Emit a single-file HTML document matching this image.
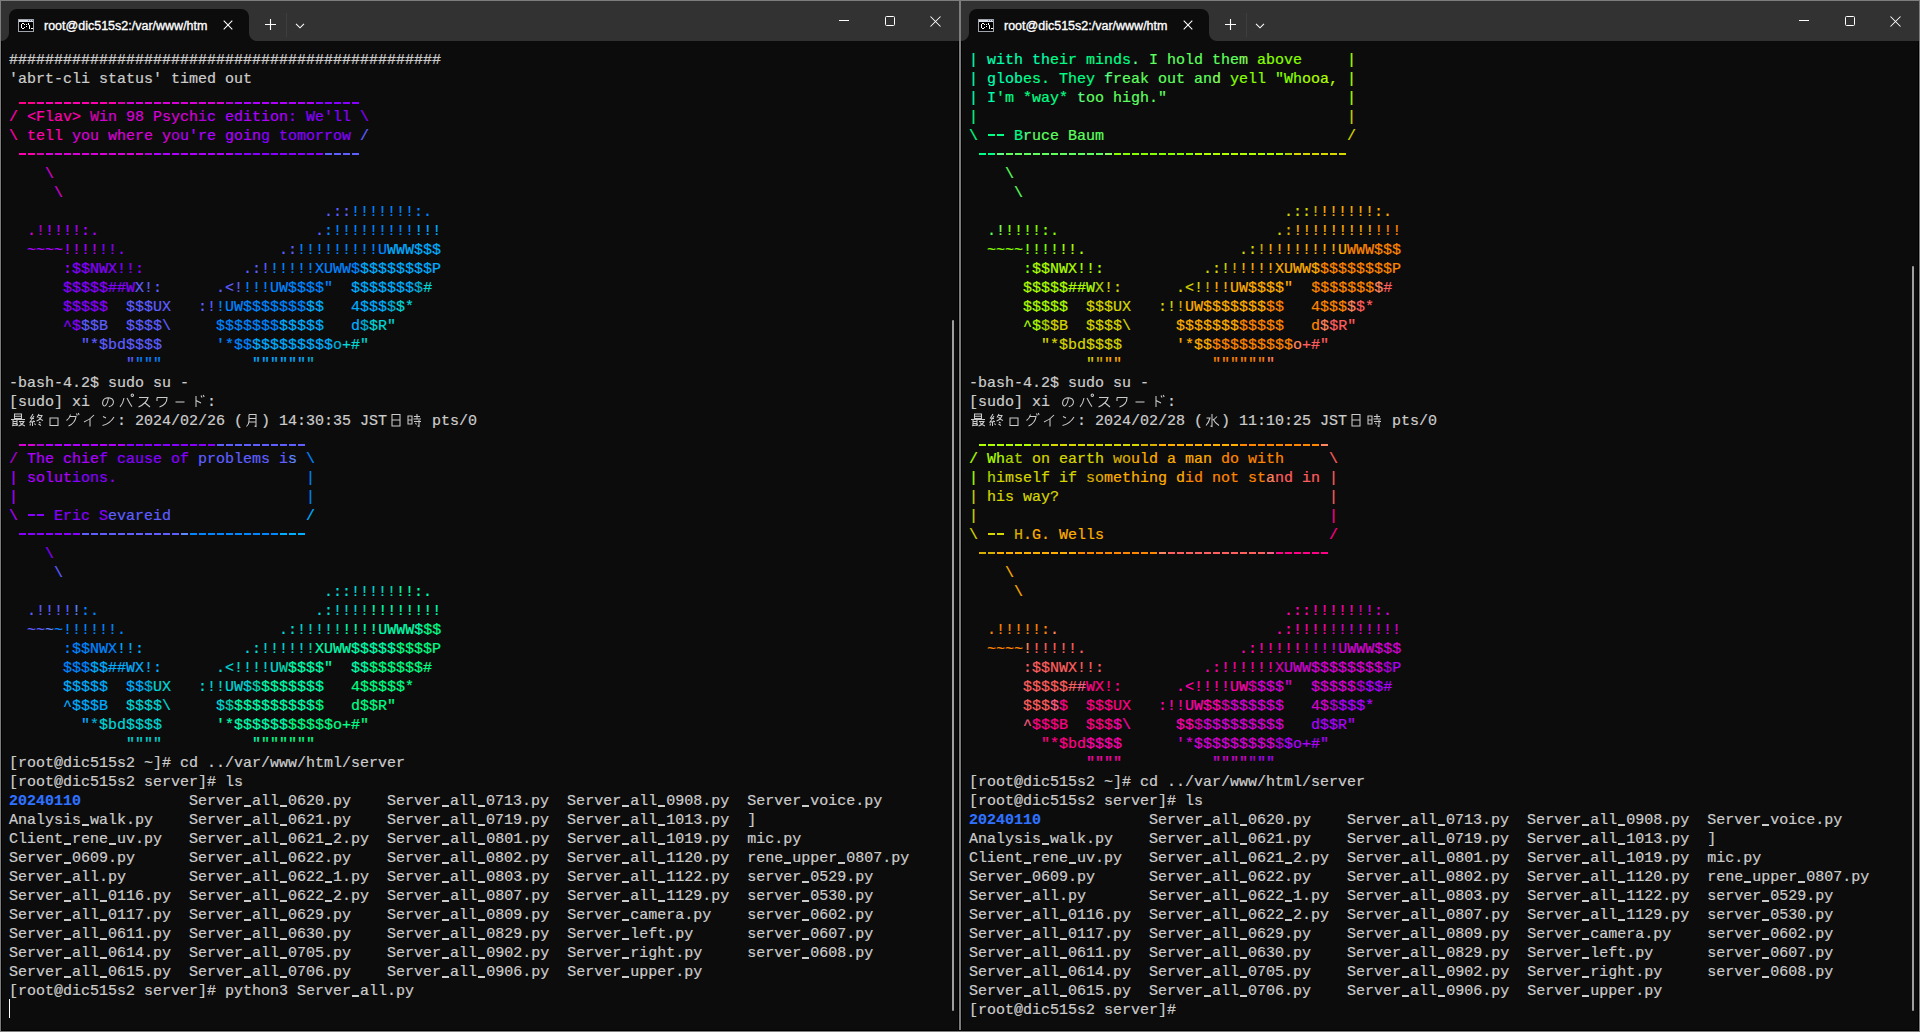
<!DOCTYPE html><html><head><meta charset="utf-8"><style>
html,body{margin:0;padding:0}
body{width:1920px;height:1032px;overflow:hidden;position:relative;background:#0c0c0c}
.win{position:absolute;top:0;width:960px;height:1032px;background:#0c0c0c;overflow:hidden}
.tb{position:absolute;left:0;top:0;width:960px;height:41px;background:#323232}
.tab{position:absolute;left:9px;top:9px;width:240px;height:32px;background:#0c0c0c;border-radius:8px 8px 0 0}
.foot{position:absolute;bottom:0;width:8px;height:8px;background:#0c0c0c}
.foot::after{content:"";position:absolute;left:0;top:0;width:8px;height:8px;background:#323232}
.fl{left:-8px}
.fl::after{border-bottom-right-radius:8px}
.fr{right:-8px}
.fr::after{border-bottom-left-radius:8px}
.ticon{position:absolute;left:9px;top:10px}
.ttl{position:absolute;left:35px;top:10px;font:12.5px/14px "Liberation Sans",sans-serif;-webkit-text-stroke:0.35px #fff;color:#fff;white-space:nowrap}
.tclose{position:absolute;left:214px;top:11px}
.plus{position:absolute;left:265px;top:19px}
.sep{position:absolute;left:286px;top:13px;width:1px;height:24px;background:#3e3e3e}
.chev{position:absolute;left:295px;top:22.5px}
.wmin{position:absolute;left:839px;top:20px;width:10px;height:1px;background:#fff}
.wmax{position:absolute;left:885px;top:16px;width:8px;height:8px;border:1px solid #fff;border-radius:1.5px}
.wclose{position:absolute;left:930px;top:15.5px}
.term{position:absolute;left:0;top:41px;width:960px;height:991px}
.row{position:absolute;left:9px;height:19px;white-space:pre;font:15px/19px "Liberation Mono",monospace;color:#cccccc}
.row i{font-style:normal}
.dir{color:#2f72ff;font-weight:bold}
.cj{position:absolute;top:-1.5px;fill:none;stroke:#cccccc;stroke-width:1.05}
.cursor{position:absolute;left:9px;top:958px;width:1px;height:19px;background:#fff}
.bd{position:absolute;background:#7d7d7d}
.sb{position:absolute;width:2px;background:#9f9f9f;border-radius:1px}
.row i.d,.row i.u{display:inline-block;height:19px;vertical-align:top}
.row i.d{background:linear-gradient(to right,currentColor 7px,transparent 7px) 1px 7px/9px 2px repeat-x}
.row i.u{background:linear-gradient(to right,currentColor 7px,transparent 7px) 1px 13px/9px 2px repeat-x}
.row{-webkit-text-stroke:0.2px currentColor}
.ib{position:absolute;background:#000}

</style></head><body>
<div class="win" style="left:0px">
<div class="tb"><div class="tab"><div class="foot fl"></div><div class="foot fr"></div><svg class="ticon" width="16" height="13" viewBox="0 0 16 13" shape-rendering="crispEdges"><rect x="0" y="0" width="16" height="13" fill="#a0a4ac"/><rect x="1" y="1" width="14" height="2" fill="#d8dce4"/><rect x="10" y="1" width="1" height="1" fill="#5a6a8a"/><rect x="12" y="1" width="1" height="1" fill="#5a6a8a"/><rect x="14" y="1" width="1" height="1" fill="#5a6a8a"/><rect x="1" y="3" width="14" height="9" fill="#000"/><g fill="#fff"><rect x="3" y="5" width="1" height="4"/><rect x="4" y="4" width="2" height="1"/><rect x="4" y="9" width="2" height="1"/><rect x="6" y="5" width="1" height="1"/><rect x="6" y="8" width="1" height="1"/><rect x="8" y="5" width="1" height="1"/><rect x="8" y="7" width="1" height="1"/><rect x="10" y="4" width="1" height="2"/><rect x="11" y="6" width="1" height="2"/><rect x="11" y="8" width="1" height="2"/><rect x="13" y="9" width="2" height="1"/></g></svg><span class="ttl">root@dic515s2:/var/www/htm</span><svg class="tclose" width="10" height="10" viewBox="0 0 10 10"><path d="M0.7 0.7L9.3 9.3M9.3 0.7L0.7 9.3" stroke="#fff" stroke-width="1.05"/></svg></div><svg class="plus" width="11" height="11" viewBox="0 0 11 11"><path d="M5.5 0V11M0 5.5H11" stroke="#fff" stroke-width="1.1"/></svg><div class="sep"></div><svg class="chev" width="10" height="6" viewBox="0 0 10 6"><path d="M1 0.8L5 4.8L9 0.8" stroke="#fff" stroke-width="1.05" fill="none"/></svg><div class="wmin"></div><div class="wmax"></div><svg class="wclose" width="11" height="11" viewBox="0 0 11 11"><path d="M0.5 0.5L10.5 10.5M10.5 0.5L0.5 10.5" stroke="#fff" stroke-width="1.05"/></svg></div>
<div class="term">
<div class="row" style="top:10px">################################################</div>
<div class="row" style="top:29px">'abrt-cli status' timed out</div>
<div class="row" style="top:48px"> <i class="u" style="color:#ff0087;width:18px"></i><i class="u" style="color:#ff00af;width:81px"></i><i class="u" style="color:#d700af;width:9px"></i><i class="u" style="color:#d700d7;width:99px"></i><i class="u" style="color:#af00d7;width:9px"></i><i class="u" style="color:#af00ff;width:81px"></i><i class="u" style="color:#8700ff;width:45px"></i></div>
<div class="row" style="top:67px"><i style="color:#ff00af">/ &lt;Flav&gt; </i><i style="color:#d700af">W</i><i style="color:#d700d7">in 98 Psych</i><i style="color:#af00d7">i</i><i style="color:#af00ff">c edition</i><i style="color:#8700ff">: We'll \</i></div>
<div class="row" style="top:86px"><i style="color:#ff00af">\ tell </i><i style="color:#d700d7">you where y</i><i style="color:#af00d7">o</i><i style="color:#af00ff">u're goin</i><i style="color:#8700ff">g tomorrow </i><i style="color:#5f5fff">/</i></div>
<div class="row" style="top:105px"> <i class="d" style="color:#ff00af;width:18px"></i><i class="d" style="color:#d700af;width:9px"></i><i class="d" style="color:#d700d7;width:99px"></i><i class="d" style="color:#af00d7;width:9px"></i><i class="d" style="color:#af00ff;width:81px"></i><i class="d" style="color:#8700ff;width:90px"></i><i class="d" style="color:#5f5fff;width:36px"></i></div>
<div class="row" style="top:124px">    <i style="color:#d700d7">\</i></div>
<div class="row" style="top:143px">     <i style="color:#d700d7">\</i></div>
<div class="row" style="top:162px">                                   <i style="color:#5f5fff">.::</i><i style="color:#0087ff">!!!!!!!:.</i></div>
<div class="row" style="top:181px">  <i style="color:#d700d7">.</i><i style="color:#af00d7">!</i><i style="color:#af00ff">!!!!:.                        </i><i style="color:#5f5fff">.</i><i style="color:#0087ff">:!!!!!!!!!</i><i style="color:#00afff">!!!</i></div>
<div class="row" style="top:200px">  <i style="color:#af00ff">~~~~!!!!</i><i style="color:#8700ff">!!.                 </i><i style="color:#5f5fff">.:</i><i style="color:#0087ff">!!!!!!!!!U</i><i style="color:#00afff">WWW$$$</i></div>
<div class="row" style="top:219px">      <i style="color:#af00ff">:</i><i style="color:#8700ff">$$NWX!!:           </i><i style="color:#5f5fff">.:!</i><i style="color:#0087ff">!!!!!XUWW$</i><i style="color:#00afff">$$$$$$$$P</i></div>
<div class="row" style="top:238px">      <i style="color:#8700ff">$$$$$##W</i><i style="color:#5f5fff">X!:      .&lt;!</i><i style="color:#0087ff">!!!UW$$$$"  </i><i style="color:#00afff">$$$$$$$</i><i style="color:#00afd7">$</i><i style="color:#00d7d7">#</i></div>
<div class="row" style="top:257px">      <i style="color:#8700ff">$$$$$  </i><i style="color:#5f5fff">$$$UX   :!</i><i style="color:#0087ff">!UW$$$$$$$</i><i style="color:#00afff">$$   4$$$</i><i style="color:#00afd7">$</i><i style="color:#00d7d7">$*</i></div>
<div class="row" style="top:276px">      <i style="color:#8700ff">^$</i><i style="color:#5f5fff">$$B  $$$$\     </i><i style="color:#0087ff">$$$$$$$</i><i style="color:#00afff">$$$$$   d</i><i style="color:#00afd7">$</i><i style="color:#00d7d7">$R"</i></div>
<div class="row" style="top:295px">        <i style="color:#5f5fff">"*$bd$$$$      </i><i style="color:#0087ff">'*$$</i><i style="color:#00afff">$$$$$$$$$</i><i style="color:#00afd7">o</i><i style="color:#00d7d7">+#"</i></div>
<div class="row" style="top:314px">             <i style="color:#5f5fff">"</i><i style="color:#0087ff">"""          </i><i style="color:#00afff">""""""</i><i style="color:#00afd7">"</i></div>
<div class="row" style="top:333px">-bash-4.2$ sudo su -</div>
<div class="row" style="top:352px">[sudo] xi             :<svg class="cj" style="left:90px" width="18" height="19" viewBox="0 0 18 19"><path d="M9.5 5.5C9 9 8 13 6 13.8C4 14.5 3 11.5 4 9C5 6.5 8 5.5 11 6C14 6.5 15.2 9.5 14 12C13 14 11 14.6 9.8 14.8"/></svg><svg class="cj" style="left:108px" width="18" height="19" viewBox="0 0 18 19"><path d="M7 6C6.5 9.5 5 12.5 3 14.8M10 6C11.5 9 13 12 15 14.8M15.3 3.2m-1.2 0a1.2 1.2 0 1 0 2.4 0a1.2 1.2 0 1 0 -2.4 0"/></svg><svg class="cj" style="left:126px" width="18" height="19" viewBox="0 0 18 19"><path d="M4 5.5H13C12 9 8 13 3.5 15M9.5 10.5L15 15"/></svg><svg class="cj" style="left:144px" width="18" height="19" viewBox="0 0 18 19"><path d="M4 5.5V9M4 5.5H14C14 10 11 13.5 6.5 15"/></svg><svg class="cj" style="left:162px" width="18" height="19" viewBox="0 0 18 19"><path d="M4.5 10H13.5"/></svg><svg class="cj" style="left:180px" width="18" height="19" viewBox="0 0 18 19"><path d="M7 4V15M7 8.5L12 11M12 3.5L13 5.5M14.2 3L15.2 5"/></svg></div>
<div class="row" style="top:371px">            : 2024/02/26 (  ) 14:30:35 JST     pts/0<svg class="cj" style="left:0px" width="18" height="19" viewBox="0 0 18 19"><path d="M5.5 3H12.5V7.5H5.5ZM5.5 5.25H12.5M2 8.5H16M4 8.5V15M4 10.5H8M4 12.5H8M3 14.8L9 13.8M8 8.5V15M10 10.5H15C14 12.5 12 14.5 9.5 15M11 11.5C12 13 14 14.5 16 15"/></svg><svg class="cj" style="left:18px" width="18" height="19" viewBox="0 0 18 19"><path d="M6 3L3.5 7L7 7.5M7 5L3 11L8 10.5M6.5 9.5L7.5 11M5.5 11V15M3.5 12.5L3 14.5M7.5 12.5L8.5 14M12 3L10 6.5M11 4.5H15C13.5 8 11.5 9.5 9.5 10M11.5 6C13 8 14.5 9 16 9.5M12 11L13.5 12M11.5 13L14 14.5"/></svg><svg class="cj" style="left:36px" width="18" height="19" viewBox="0 0 18 19"><path d="M5 7H13V14.5H5Z"/></svg><svg class="cj" style="left:54px" width="18" height="19" viewBox="0 0 18 19"><path d="M7.5 3.5C7 6 5.5 8 3.5 9.5M7 5.5H13C12.5 10 10 13 5.5 15M13.5 2.5L14.3 4.5M15.3 2L16.1 4"/></svg><svg class="cj" style="left:72px" width="18" height="19" viewBox="0 0 18 19"><path d="M13 4C10.5 7 7 9.5 3 11M9 8V15.5"/></svg><svg class="cj" style="left:90px" width="18" height="19" viewBox="0 0 18 19"><path d="M4 5.5L7 7M3.5 14.5C8 13.5 12 11 15 6"/></svg><svg class="cj" style="left:234px" width="18" height="19" viewBox="0 0 18 19"><path d="M6 3.5V10C6 12.5 5 14 3.5 15.5M6 3.5H13V15.5L11.5 15M6 7.5H13M6 11H13"/></svg><svg class="cj" style="left:378px" width="18" height="19" viewBox="0 0 18 19"><path d="M5 3.5H13V15H5ZM5 9H13"/></svg><svg class="cj" style="left:396px" width="18" height="19" viewBox="0 0 18 19"><path d="M3 5H7V13H3ZM3 9H7M9 5.5H15M12 3V8M8.5 8H16M9 10.5H16M14 9V15.5L12.5 15M10.5 12L11.5 13.5"/></svg></div>
<div class="row" style="top:390px"> <i class="u" style="color:#d700d7;width:18px"></i><i class="u" style="color:#af00d7;width:9px"></i><i class="u" style="color:#af00ff;width:81px"></i><i class="u" style="color:#8700ff;width:90px"></i><i class="u" style="color:#5f5fff;width:90px"></i></div>
<div class="row" style="top:409px"><i style="color:#af00d7">/ </i><i style="color:#af00ff">The chie</i><i style="color:#8700ff">f cause of </i><i style="color:#5f5fff">problems i</i><i style="color:#5f87ff">s </i><i style="color:#0087ff">\</i></div>
<div class="row" style="top:428px"><i style="color:#af00ff">| solut</i><i style="color:#8700ff">ions.                     </i><i style="color:#0087ff">|</i></div>
<div class="row" style="top:447px"><i style="color:#af00ff">|                                </i><i style="color:#0087ff">|</i></div>
<div class="row" style="top:466px"><i style="color:#af00ff">\ </i><i class="d" style="color:#8700ff;width:18px"></i><i style="color:#8700ff"> Eric S</i><i style="color:#5f5fff">evareid               </i><i style="color:#00afff">/</i></div>
<div class="row" style="top:485px"> <i class="d" style="color:#8700ff;width:63px"></i><i class="d" style="color:#5f5fff;width:99px"></i><i class="d" style="color:#5f87ff;width:9px"></i><i class="d" style="color:#0087ff;width:90px"></i><i class="d" style="color:#00afff;width:27px"></i></div>
<div class="row" style="top:504px">    <i style="color:#8700ff">\</i></div>
<div class="row" style="top:523px">     <i style="color:#5f5fff">\</i></div>
<div class="row" style="top:542px">                                   <i style="color:#00d7d7">.::!!!!</i><i style="color:#00d7af">!</i><i style="color:#00ffaf">!!:.</i></div>
<div class="row" style="top:561px">  <i style="color:#5f5fff">.!!!!</i><i style="color:#5f87ff">!</i><i style="color:#0087ff">:.                        </i><i style="color:#00d7d7">.:!!!</i><i style="color:#00d7af">!</i><i style="color:#00ffaf">!!!!!!!!</i></div>
<div class="row" style="top:580px">  <i style="color:#5f5fff">~~</i><i style="color:#5f87ff">~</i><i style="color:#0087ff">~!!!!!!.                 </i><i style="color:#00d7d7">.:!!!!</i><i style="color:#00d7af">!</i><i style="color:#00ffaf">!!!!UWWW$</i><i style="color:#00ff87">$$</i></div>
<div class="row" style="top:599px">      <i style="color:#0087ff">:$$NWX</i><i style="color:#00afff">!!:           </i><i style="color:#00d7d7">.:!!!!!</i><i style="color:#00d7af">!</i><i style="color:#00ffaf">XUWW$$$$$</i><i style="color:#00ff87">$$$$P</i></div>
<div class="row" style="top:618px">      <i style="color:#0087ff">$$$</i><i style="color:#00afff">$$##WX!:      </i><i style="color:#00d7d7">.&lt;!!!!U</i><i style="color:#00d7af">W</i><i style="color:#00ffaf">$$$$"  $$</i><i style="color:#00ff87">$$$$$$#</i></div>
<div class="row" style="top:637px">      <i style="color:#00afff">$$$$$  $$</i><i style="color:#00afd7">$</i><i style="color:#00d7d7">UX   :!!UW$</i><i style="color:#00d7af">$</i><i style="color:#00ffaf">$$$$$$$   </i><i style="color:#00ff87">4$$$$$*</i></div>
<div class="row" style="top:656px">      <i style="color:#00afff">^$$$B  </i><i style="color:#00d7d7">$$$$\     $</i><i style="color:#00d7af">$</i><i style="color:#00ffaf">$$$$$$$$$</i><i style="color:#00ff87">$   d$$R"</i></div>
<div class="row" style="top:675px">        <i style="color:#00afff">"</i><i style="color:#00afd7">*</i><i style="color:#00d7d7">$bd$$$$      </i><i style="color:#00ffaf">'*$$$$$$</i><i style="color:#00ff87">$$$$$o+#"</i></div>
<div class="row" style="top:694px">             <i style="color:#00d7d7">""""          </i><i style="color:#00ffaf">"</i><i style="color:#00ff87">""""""</i></div>
<div class="row" style="top:713px">[root@dic515s2 ~]# cd ../var/www/html/server</div>
<div class="row" style="top:732px">[root@dic515s2 server]# ls</div>
<div class="row" style="top:751px"><b class="dir">20240110</b>            Server<i class="u" style="width:9px"></i>all<i class="u" style="width:9px"></i>0620.py    Server<i class="u" style="width:9px"></i>all<i class="u" style="width:9px"></i>0713.py  Server<i class="u" style="width:9px"></i>all<i class="u" style="width:9px"></i>0908.py  Server<i class="u" style="width:9px"></i>voice.py</div>
<div class="row" style="top:770px">Analysis<i class="u" style="width:9px"></i>walk.py    Server<i class="u" style="width:9px"></i>all<i class="u" style="width:9px"></i>0621.py    Server<i class="u" style="width:9px"></i>all<i class="u" style="width:9px"></i>0719.py  Server<i class="u" style="width:9px"></i>all<i class="u" style="width:9px"></i>1013.py  ]</div>
<div class="row" style="top:789px">Client<i class="u" style="width:9px"></i>rene<i class="u" style="width:9px"></i>uv.py   Server<i class="u" style="width:9px"></i>all<i class="u" style="width:9px"></i>0621<i class="u" style="width:9px"></i>2.py  Server<i class="u" style="width:9px"></i>all<i class="u" style="width:9px"></i>0801.py  Server<i class="u" style="width:9px"></i>all<i class="u" style="width:9px"></i>1019.py  mic.py</div>
<div class="row" style="top:808px">Server<i class="u" style="width:9px"></i>0609.py      Server<i class="u" style="width:9px"></i>all<i class="u" style="width:9px"></i>0622.py    Server<i class="u" style="width:9px"></i>all<i class="u" style="width:9px"></i>0802.py  Server<i class="u" style="width:9px"></i>all<i class="u" style="width:9px"></i>1120.py  rene<i class="u" style="width:9px"></i>upper<i class="u" style="width:9px"></i>0807.py</div>
<div class="row" style="top:827px">Server<i class="u" style="width:9px"></i>all.py       Server<i class="u" style="width:9px"></i>all<i class="u" style="width:9px"></i>0622<i class="u" style="width:9px"></i>1.py  Server<i class="u" style="width:9px"></i>all<i class="u" style="width:9px"></i>0803.py  Server<i class="u" style="width:9px"></i>all<i class="u" style="width:9px"></i>1122.py  server<i class="u" style="width:9px"></i>0529.py</div>
<div class="row" style="top:846px">Server<i class="u" style="width:9px"></i>all<i class="u" style="width:9px"></i>0116.py  Server<i class="u" style="width:9px"></i>all<i class="u" style="width:9px"></i>0622<i class="u" style="width:9px"></i>2.py  Server<i class="u" style="width:9px"></i>all<i class="u" style="width:9px"></i>0807.py  Server<i class="u" style="width:9px"></i>all<i class="u" style="width:9px"></i>1129.py  server<i class="u" style="width:9px"></i>0530.py</div>
<div class="row" style="top:865px">Server<i class="u" style="width:9px"></i>all<i class="u" style="width:9px"></i>0117.py  Server<i class="u" style="width:9px"></i>all<i class="u" style="width:9px"></i>0629.py    Server<i class="u" style="width:9px"></i>all<i class="u" style="width:9px"></i>0809.py  Server<i class="u" style="width:9px"></i>camera.py    server<i class="u" style="width:9px"></i>0602.py</div>
<div class="row" style="top:884px">Server<i class="u" style="width:9px"></i>all<i class="u" style="width:9px"></i>0611.py  Server<i class="u" style="width:9px"></i>all<i class="u" style="width:9px"></i>0630.py    Server<i class="u" style="width:9px"></i>all<i class="u" style="width:9px"></i>0829.py  Server<i class="u" style="width:9px"></i>left.py      server<i class="u" style="width:9px"></i>0607.py</div>
<div class="row" style="top:903px">Server<i class="u" style="width:9px"></i>all<i class="u" style="width:9px"></i>0614.py  Server<i class="u" style="width:9px"></i>all<i class="u" style="width:9px"></i>0705.py    Server<i class="u" style="width:9px"></i>all<i class="u" style="width:9px"></i>0902.py  Server<i class="u" style="width:9px"></i>right.py     server<i class="u" style="width:9px"></i>0608.py</div>
<div class="row" style="top:922px">Server<i class="u" style="width:9px"></i>all<i class="u" style="width:9px"></i>0615.py  Server<i class="u" style="width:9px"></i>all<i class="u" style="width:9px"></i>0706.py    Server<i class="u" style="width:9px"></i>all<i class="u" style="width:9px"></i>0906.py  Server<i class="u" style="width:9px"></i>upper.py</div>
<div class="row" style="top:941px">[root@dic515s2 server]# python3 Server<i class="u" style="width:9px"></i>all.py</div>
<div class="cursor"></div>
</div>
</div>
<div class="win" style="left:960px">
<div class="tb"><div class="tab"><div class="foot fl"></div><div class="foot fr"></div><svg class="ticon" width="16" height="13" viewBox="0 0 16 13" shape-rendering="crispEdges"><rect x="0" y="0" width="16" height="13" fill="#a0a4ac"/><rect x="1" y="1" width="14" height="2" fill="#d8dce4"/><rect x="10" y="1" width="1" height="1" fill="#5a6a8a"/><rect x="12" y="1" width="1" height="1" fill="#5a6a8a"/><rect x="14" y="1" width="1" height="1" fill="#5a6a8a"/><rect x="1" y="3" width="14" height="9" fill="#000"/><g fill="#fff"><rect x="3" y="5" width="1" height="4"/><rect x="4" y="4" width="2" height="1"/><rect x="4" y="9" width="2" height="1"/><rect x="6" y="5" width="1" height="1"/><rect x="6" y="8" width="1" height="1"/><rect x="8" y="5" width="1" height="1"/><rect x="8" y="7" width="1" height="1"/><rect x="10" y="4" width="1" height="2"/><rect x="11" y="6" width="1" height="2"/><rect x="11" y="8" width="1" height="2"/><rect x="13" y="9" width="2" height="1"/></g></svg><span class="ttl">root@dic515s2:/var/www/htm</span><svg class="tclose" width="10" height="10" viewBox="0 0 10 10"><path d="M0.7 0.7L9.3 9.3M9.3 0.7L0.7 9.3" stroke="#fff" stroke-width="1.05"/></svg></div><svg class="plus" width="11" height="11" viewBox="0 0 11 11"><path d="M5.5 0V11M0 5.5H11" stroke="#fff" stroke-width="1.1"/></svg><div class="sep"></div><svg class="chev" width="10" height="6" viewBox="0 0 10 6"><path d="M1 0.8L5 4.8L9 0.8" stroke="#fff" stroke-width="1.05" fill="none"/></svg><div class="wmin"></div><div class="wmax"></div><svg class="wclose" width="11" height="11" viewBox="0 0 11 11"><path d="M0.5 0.5L10.5 10.5M10.5 0.5L0.5 10.5" stroke="#fff" stroke-width="1.05"/></svg></div>
<div class="term">
<div class="row" style="top:10px"><i style="color:#00ffaf">| with th</i><i style="color:#00ff87">eir minds</i><i style="color:#5fff87">. </i><i style="color:#5fff5f">I hold the</i><i style="color:#87ff5f">m </i><i style="color:#87ff00">above     </i><i style="color:#afff00">|</i></div>
<div class="row" style="top:29px"><i style="color:#00ffaf">| glob</i><i style="color:#00ff87">es. They </i><i style="color:#5fff87">f</i><i style="color:#5fff5f">reak out an</i><i style="color:#87ff5f">d </i><i style="color:#87ff00">yell "Wh</i><i style="color:#afff00">ooa, |</i></div>
<div class="row" style="top:48px"><i style="color:#00ffaf">| I</i><i style="color:#00ff87">'m *way* </i><i style="color:#5fff87">t</i><i style="color:#5fff5f">oo high."                    </i><i style="color:#afff00">|</i></div>
<div class="row" style="top:67px"><i style="color:#00ff87">|                                         </i><i style="color:#d7d700">|</i></div>
<div class="row" style="top:86px"><i style="color:#00ff87">\ </i><i class="d" style="color:#00ff87;width:18px"></i><i style="color:#00ff87"> B</i><i style="color:#5fff87">r</i><i style="color:#5fff5f">uce Baum                           </i><i style="color:#d7d700">/</i></div>
<div class="row" style="top:105px"> <i class="d" style="color:#00ff87;width:18px"></i><i class="d" style="color:#5fff87;width:9px"></i><i class="d" style="color:#5fff5f;width:99px"></i><i class="d" style="color:#87ff5f;width:9px"></i><i class="d" style="color:#87ff00;width:81px"></i><i class="d" style="color:#afff00;width:90px"></i><i class="d" style="color:#afd700;width:9px"></i><i class="d" style="color:#d7d700;width:54px"></i></div>
<div class="row" style="top:124px">    <i style="color:#5fff5f">\</i></div>
<div class="row" style="top:143px">     <i style="color:#5fff5f">\</i></div>
<div class="row" style="top:162px">                                   <i style="color:#d7d700">.::</i><i style="color:#d7af00">!</i><i style="color:#ffaf00">!!!!!!:.</i></div>
<div class="row" style="top:181px">  <i style="color:#5fff5f">.</i><i style="color:#87ff5f">!</i><i style="color:#87ff00">!!!!:.                        </i><i style="color:#d7d700">.</i><i style="color:#d7af00">:</i><i style="color:#ffaf00">!!!!!!!!!</i><i style="color:#ff8700">!!!</i></div>
<div class="row" style="top:200px">  <i style="color:#87ff00">~~~~!!!!</i><i style="color:#afff00">!!.                 </i><i style="color:#d7d700">.:</i><i style="color:#d7af00">!</i><i style="color:#ffaf00">!!!!!!!!U</i><i style="color:#ff8700">WWW$$$</i></div>
<div class="row" style="top:219px">      <i style="color:#87ff00">:</i><i style="color:#afff00">$$NWX!!:           </i><i style="color:#d7d700">.:!</i><i style="color:#d7af00">!</i><i style="color:#ffaf00">!!!!XUWW$</i><i style="color:#ff8700">$$$$$$$$P</i></div>
<div class="row" style="top:238px">      <i style="color:#afff00">$$$$$##W</i><i style="color:#afd700">X</i><i style="color:#d7d700">!:      .&lt;!</i><i style="color:#d7af00">!</i><i style="color:#ffaf00">!!UW$$$$"  </i><i style="color:#ff8700">$$$$$$$</i><i style="color:#ff875f">$</i><i style="color:#ff5f5f">#</i></div>
<div class="row" style="top:257px">      <i style="color:#afff00">$$$$$  </i><i style="color:#d7d700">$$$UX   :!</i><i style="color:#d7af00">!</i><i style="color:#ffaf00">UW$$$$$$$</i><i style="color:#ff8700">$$   4$$$</i><i style="color:#ff875f">$</i><i style="color:#ff5f5f">$*</i></div>
<div class="row" style="top:276px">      <i style="color:#afff00">^$</i><i style="color:#afd700">$</i><i style="color:#d7d700">$B  $$$$\     </i><i style="color:#ffaf00">$$$$$$$</i><i style="color:#ff8700">$$$$$   d</i><i style="color:#ff875f">$</i><i style="color:#ff5f5f">$R"</i></div>
<div class="row" style="top:295px">        <i style="color:#d7d700">"*$bd$$$$      </i><i style="color:#ffaf00">'*$$</i><i style="color:#ff8700">$$$$$$$$$</i><i style="color:#ff875f">o</i><i style="color:#ff5f5f">+#"</i></div>
<div class="row" style="top:314px">             <i style="color:#d7d700">"</i><i style="color:#d7af00">"</i><i style="color:#ffaf00">""          </i><i style="color:#ff8700">""""""</i><i style="color:#ff875f">"</i></div>
<div class="row" style="top:333px">-bash-4.2$ sudo su -</div>
<div class="row" style="top:352px">[sudo] xi             :<svg class="cj" style="left:90px" width="18" height="19" viewBox="0 0 18 19"><path d="M9.5 5.5C9 9 8 13 6 13.8C4 14.5 3 11.5 4 9C5 6.5 8 5.5 11 6C14 6.5 15.2 9.5 14 12C13 14 11 14.6 9.8 14.8"/></svg><svg class="cj" style="left:108px" width="18" height="19" viewBox="0 0 18 19"><path d="M7 6C6.5 9.5 5 12.5 3 14.8M10 6C11.5 9 13 12 15 14.8M15.3 3.2m-1.2 0a1.2 1.2 0 1 0 2.4 0a1.2 1.2 0 1 0 -2.4 0"/></svg><svg class="cj" style="left:126px" width="18" height="19" viewBox="0 0 18 19"><path d="M4 5.5H13C12 9 8 13 3.5 15M9.5 10.5L15 15"/></svg><svg class="cj" style="left:144px" width="18" height="19" viewBox="0 0 18 19"><path d="M4 5.5V9M4 5.5H14C14 10 11 13.5 6.5 15"/></svg><svg class="cj" style="left:162px" width="18" height="19" viewBox="0 0 18 19"><path d="M4.5 10H13.5"/></svg><svg class="cj" style="left:180px" width="18" height="19" viewBox="0 0 18 19"><path d="M7 4V15M7 8.5L12 11M12 3.5L13 5.5M14.2 3L15.2 5"/></svg></div>
<div class="row" style="top:371px">            : 2024/02/28 (  ) 11:10:25 JST     pts/0<svg class="cj" style="left:0px" width="18" height="19" viewBox="0 0 18 19"><path d="M5.5 3H12.5V7.5H5.5ZM5.5 5.25H12.5M2 8.5H16M4 8.5V15M4 10.5H8M4 12.5H8M3 14.8L9 13.8M8 8.5V15M10 10.5H15C14 12.5 12 14.5 9.5 15M11 11.5C12 13 14 14.5 16 15"/></svg><svg class="cj" style="left:18px" width="18" height="19" viewBox="0 0 18 19"><path d="M6 3L3.5 7L7 7.5M7 5L3 11L8 10.5M6.5 9.5L7.5 11M5.5 11V15M3.5 12.5L3 14.5M7.5 12.5L8.5 14M12 3L10 6.5M11 4.5H15C13.5 8 11.5 9.5 9.5 10M11.5 6C13 8 14.5 9 16 9.5M12 11L13.5 12M11.5 13L14 14.5"/></svg><svg class="cj" style="left:36px" width="18" height="19" viewBox="0 0 18 19"><path d="M5 7H13V14.5H5Z"/></svg><svg class="cj" style="left:54px" width="18" height="19" viewBox="0 0 18 19"><path d="M7.5 3.5C7 6 5.5 8 3.5 9.5M7 5.5H13C12.5 10 10 13 5.5 15M13.5 2.5L14.3 4.5M15.3 2L16.1 4"/></svg><svg class="cj" style="left:72px" width="18" height="19" viewBox="0 0 18 19"><path d="M13 4C10.5 7 7 9.5 3 11M9 8V15.5"/></svg><svg class="cj" style="left:90px" width="18" height="19" viewBox="0 0 18 19"><path d="M4 5.5L7 7M3.5 14.5C8 13.5 12 11 15 6"/></svg><svg class="cj" style="left:234px" width="18" height="19" viewBox="0 0 18 19"><path d="M9 3V15.5L7.5 15M3.5 7H7C6 10.5 4.5 13 3 14.5M14 5.5L10.5 9M10 8C11.5 11 13.5 13 16 14.5"/></svg><svg class="cj" style="left:378px" width="18" height="19" viewBox="0 0 18 19"><path d="M5 3.5H13V15H5ZM5 9H13"/></svg><svg class="cj" style="left:396px" width="18" height="19" viewBox="0 0 18 19"><path d="M3 5H7V13H3ZM3 9H7M9 5.5H15M12 3V8M8.5 8H16M9 10.5H16M14 9V15.5L12.5 15M10.5 12L11.5 13.5"/></svg></div>
<div class="row" style="top:390px"> <i class="u" style="color:#afff00;width:54px"></i><i class="u" style="color:#afd700;width:18px"></i><i class="u" style="color:#d7d700;width:90px"></i><i class="u" style="color:#d7af00;width:18px"></i><i class="u" style="color:#ffaf00;width:81px"></i><i class="u" style="color:#ff8700;width:81px"></i><i class="u" style="color:#ff875f;width:9px"></i></div>
<div class="row" style="top:409px"><i style="color:#afff00">/ Wh</i><i style="color:#afd700">at </i><i style="color:#d7d700">on earth </i><i style="color:#d7af00">wo</i><i style="color:#ffaf00">uld a man </i><i style="color:#ff8700">do with     </i><i style="color:#ff5f5f">\</i></div>
<div class="row" style="top:428px"><i style="color:#afff00">| </i><i style="color:#afd700">h</i><i style="color:#d7d700">imself if </i><i style="color:#d7af00">so</i><i style="color:#ffaf00">mething d</i><i style="color:#ff8700">id not st</i><i style="color:#ff875f">a</i><i style="color:#ff5f5f">nd in |</i></div>
<div class="row" style="top:447px"><i style="color:#d7d700">| his way?                              </i><i style="color:#ff5f5f">|</i></div>
<div class="row" style="top:466px"><i style="color:#d7d700">|                                       </i><i style="color:#ff0087">|</i></div>
<div class="row" style="top:485px"><i style="color:#d7d700">\ </i><i class="d" style="color:#d7d700;width:18px"></i><i style="color:#d7af00"> H</i><i style="color:#ffaf00">.G. Wells                         </i><i style="color:#ff0087">/</i></div>
<div class="row" style="top:504px"> <i class="d" style="color:#d7af00;width:18px"></i><i class="d" style="color:#ffaf00;width:81px"></i><i class="d" style="color:#ff8700;width:81px"></i><i class="d" style="color:#ff875f;width:9px"></i><i class="d" style="color:#ff5f5f;width:99px"></i><i class="d" style="color:#ff5f87;width:9px"></i><i class="d" style="color:#ff0087;width:54px"></i></div>
<div class="row" style="top:523px">    <i style="color:#ffaf00">\</i></div>
<div class="row" style="top:542px">     <i style="color:#ffaf00">\</i></div>
<div class="row" style="top:561px">                                   <i style="color:#ff00af">.::!!!!!</i><i style="color:#d700af">!</i><i style="color:#d700d7">!:.</i></div>
<div class="row" style="top:580px">  <i style="color:#ff8700">.!!!!!:</i><i style="color:#ff875f">.                        </i><i style="color:#ff00af">.:!!!!</i><i style="color:#d700af">!</i><i style="color:#d700d7">!!!!!!!</i></div>
<div class="row" style="top:599px">  <i style="color:#ff8700">~~~~</i><i style="color:#ff875f">!</i><i style="color:#ff5f5f">!!!!!.                 </i><i style="color:#ff00af">.:!!!!!</i><i style="color:#d700af">!</i><i style="color:#d700d7">!!!UWWW$$$</i></div>
<div class="row" style="top:618px">      <i style="color:#ff5f5f">:$$NWX!!:           </i><i style="color:#ff00af">.:!!!!!!</i><i style="color:#d700af">X</i><i style="color:#d700d7">UWW$$$$$$$$</i><i style="color:#af00d7">$</i><i style="color:#af00ff">P</i></div>
<div class="row" style="top:637px">      <i style="color:#ff5f5f">$$$$$#</i><i style="color:#ff5f87">#</i><i style="color:#ff0087">WX!:      </i><i style="color:#ff00af">.&lt;!!!!UW</i><i style="color:#d700af">$</i><i style="color:#d700d7">$$$"  $$$$$</i><i style="color:#af00d7">$</i><i style="color:#af00ff">$$#</i></div>
<div class="row" style="top:656px">      <i style="color:#ff5f5f">$$$</i><i style="color:#ff5f87">$</i><i style="color:#ff0087">$  $$$UX   </i><i style="color:#ff00af">:!!UW$$</i><i style="color:#d700af">$</i><i style="color:#d700d7">$$$$$$   4$</i><i style="color:#af00d7">$</i><i style="color:#af00ff">$$$*</i></div>
<div class="row" style="top:675px">      <i style="color:#ff5f87">^</i><i style="color:#ff0087">$$$B  $$$</i><i style="color:#ff00af">$\     $$</i><i style="color:#d700af">$</i><i style="color:#d700d7">$$$$$$$$$   </i><i style="color:#af00ff">d$$R"</i></div>
<div class="row" style="top:694px">        <i style="color:#ff0087">"*$bd</i><i style="color:#ff00af">$$$$      </i><i style="color:#d700d7">'*$$$$$$$$$</i><i style="color:#af00d7">$</i><i style="color:#af00ff">$o+#"</i></div>
<div class="row" style="top:713px">             <i style="color:#ff00af">""""          </i><i style="color:#d700d7">""""</i><i style="color:#af00d7">"</i><i style="color:#af00ff">""</i></div>
<div class="row" style="top:732px">[root@dic515s2 ~]# cd ../var/www/html/server</div>
<div class="row" style="top:751px">[root@dic515s2 server]# ls</div>
<div class="row" style="top:770px"><b class="dir">20240110</b>            Server<i class="u" style="width:9px"></i>all<i class="u" style="width:9px"></i>0620.py    Server<i class="u" style="width:9px"></i>all<i class="u" style="width:9px"></i>0713.py  Server<i class="u" style="width:9px"></i>all<i class="u" style="width:9px"></i>0908.py  Server<i class="u" style="width:9px"></i>voice.py</div>
<div class="row" style="top:789px">Analysis<i class="u" style="width:9px"></i>walk.py    Server<i class="u" style="width:9px"></i>all<i class="u" style="width:9px"></i>0621.py    Server<i class="u" style="width:9px"></i>all<i class="u" style="width:9px"></i>0719.py  Server<i class="u" style="width:9px"></i>all<i class="u" style="width:9px"></i>1013.py  ]</div>
<div class="row" style="top:808px">Client<i class="u" style="width:9px"></i>rene<i class="u" style="width:9px"></i>uv.py   Server<i class="u" style="width:9px"></i>all<i class="u" style="width:9px"></i>0621<i class="u" style="width:9px"></i>2.py  Server<i class="u" style="width:9px"></i>all<i class="u" style="width:9px"></i>0801.py  Server<i class="u" style="width:9px"></i>all<i class="u" style="width:9px"></i>1019.py  mic.py</div>
<div class="row" style="top:827px">Server<i class="u" style="width:9px"></i>0609.py      Server<i class="u" style="width:9px"></i>all<i class="u" style="width:9px"></i>0622.py    Server<i class="u" style="width:9px"></i>all<i class="u" style="width:9px"></i>0802.py  Server<i class="u" style="width:9px"></i>all<i class="u" style="width:9px"></i>1120.py  rene<i class="u" style="width:9px"></i>upper<i class="u" style="width:9px"></i>0807.py</div>
<div class="row" style="top:846px">Server<i class="u" style="width:9px"></i>all.py       Server<i class="u" style="width:9px"></i>all<i class="u" style="width:9px"></i>0622<i class="u" style="width:9px"></i>1.py  Server<i class="u" style="width:9px"></i>all<i class="u" style="width:9px"></i>0803.py  Server<i class="u" style="width:9px"></i>all<i class="u" style="width:9px"></i>1122.py  server<i class="u" style="width:9px"></i>0529.py</div>
<div class="row" style="top:865px">Server<i class="u" style="width:9px"></i>all<i class="u" style="width:9px"></i>0116.py  Server<i class="u" style="width:9px"></i>all<i class="u" style="width:9px"></i>0622<i class="u" style="width:9px"></i>2.py  Server<i class="u" style="width:9px"></i>all<i class="u" style="width:9px"></i>0807.py  Server<i class="u" style="width:9px"></i>all<i class="u" style="width:9px"></i>1129.py  server<i class="u" style="width:9px"></i>0530.py</div>
<div class="row" style="top:884px">Server<i class="u" style="width:9px"></i>all<i class="u" style="width:9px"></i>0117.py  Server<i class="u" style="width:9px"></i>all<i class="u" style="width:9px"></i>0629.py    Server<i class="u" style="width:9px"></i>all<i class="u" style="width:9px"></i>0809.py  Server<i class="u" style="width:9px"></i>camera.py    server<i class="u" style="width:9px"></i>0602.py</div>
<div class="row" style="top:903px">Server<i class="u" style="width:9px"></i>all<i class="u" style="width:9px"></i>0611.py  Server<i class="u" style="width:9px"></i>all<i class="u" style="width:9px"></i>0630.py    Server<i class="u" style="width:9px"></i>all<i class="u" style="width:9px"></i>0829.py  Server<i class="u" style="width:9px"></i>left.py      server<i class="u" style="width:9px"></i>0607.py</div>
<div class="row" style="top:922px">Server<i class="u" style="width:9px"></i>all<i class="u" style="width:9px"></i>0614.py  Server<i class="u" style="width:9px"></i>all<i class="u" style="width:9px"></i>0705.py    Server<i class="u" style="width:9px"></i>all<i class="u" style="width:9px"></i>0902.py  Server<i class="u" style="width:9px"></i>right.py     server<i class="u" style="width:9px"></i>0608.py</div>
<div class="row" style="top:941px">Server<i class="u" style="width:9px"></i>all<i class="u" style="width:9px"></i>0615.py  Server<i class="u" style="width:9px"></i>all<i class="u" style="width:9px"></i>0706.py    Server<i class="u" style="width:9px"></i>all<i class="u" style="width:9px"></i>0906.py  Server<i class="u" style="width:9px"></i>upper.py</div>
<div class="row" style="top:960px">[root@dic515s2 server]#</div>

</div>
</div>
<div class="bd" style="left:0;top:0;width:1920px;height:1px"></div>
<div class="bd" style="left:0;top:1031px;width:1920px;height:1px"></div>
<div class="bd" style="left:0;top:0;width:1px;height:1032px"></div>
<div class="bd" style="left:1919px;top:0;width:1px;height:1032px"></div>
<div class="bd" style="left:959px;top:0;width:2px;height:1032px"></div>
<div class="ib" style="left:1px;top:41px;width:1px;height:990px"></div>
<div class="ib" style="left:958px;top:41px;width:1px;height:990px"></div>
<div class="ib" style="left:961px;top:41px;width:1px;height:990px"></div>
<div class="ib" style="left:1918px;top:41px;width:1px;height:990px"></div>
<div class="ib" style="left:1px;top:1030px;width:1918px;height:1px"></div>
<div class="sb" style="left:952px;top:320px;height:691px"></div>
<div class="sb" style="left:1912px;top:266px;height:745px"></div>
</body></html>
